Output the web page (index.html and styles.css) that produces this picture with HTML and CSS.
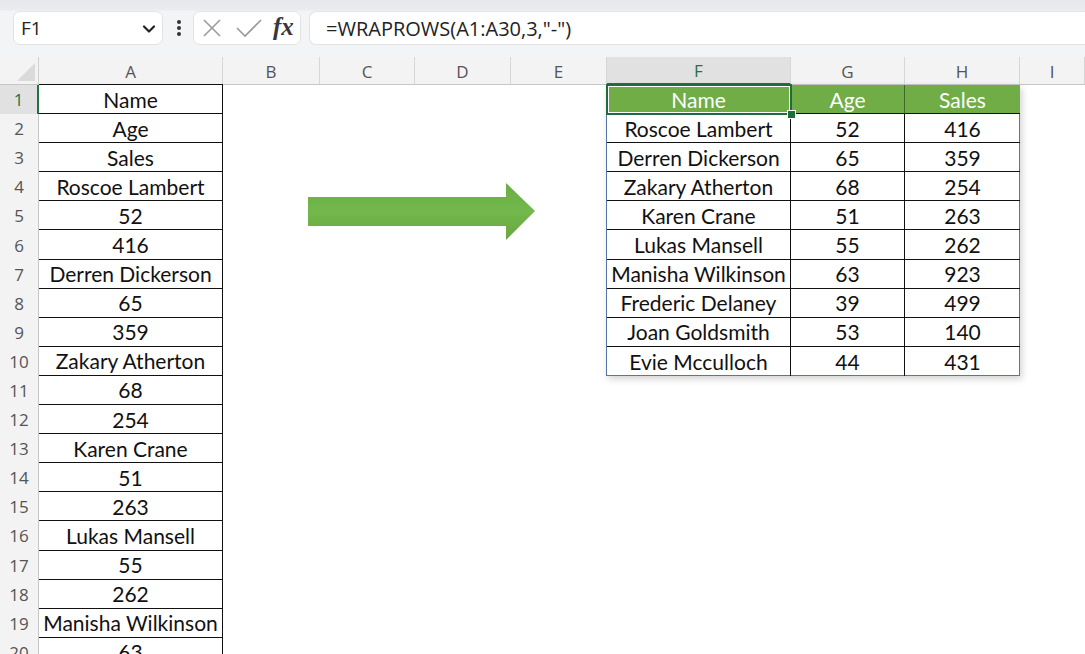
FILE: index.html
```html
<!DOCTYPE html>
<html lang="en">
<head>
  <meta charset="UTF-8" />
  <meta name="viewport" content="width=device-width, initial-scale=1.0"/>
  <title>WRAPROWS</title>
  <link rel="stylesheet" href="styles.css">
</head>
<body>
  <div class="app">
    <div class="toolbar">
      <div class="namebox">
        <span>F1</span>
        <svg class="chevron" width="14" height="10" viewBox="0 0 14 10"><path d="M2 2.5 L7 7.5 L12 2.5" fill="none" stroke="#222" stroke-width="2.2" stroke-linecap="round" stroke-linejoin="round"/></svg>
      </div>
      <svg class="dots" width="6" height="18" viewBox="0 0 6 18"><circle cx="3" cy="3" r="2"/><circle cx="3" cy="9" r="2"/><circle cx="3" cy="15" r="2"/></svg>
      <div class="fxbox">
        <svg width="20" height="20" viewBox="0 0 20 20"><path d="M2 2 L18 18 M18 2 L2 18" stroke="#9a9a9a" stroke-width="1.6" fill="none"/></svg>
        <svg width="26" height="20" viewBox="0 0 26 20"><path d="M1 10 L9 18 L25 2" stroke="#9a9a9a" stroke-width="1.6" fill="none"/></svg>
        <span class="fx">fx</span>
      </div>
      <div class="formula">=WRAPROWS(A1:A30,3,"-")</div>
    </div>

    <div class="sheet" id="sheet"></div>

    <svg class="arrow" width="230" height="60" viewBox="0 0 230 60">
      <defs>
        <linearGradient id="ag" x1="0" y1="0" x2="0" y2="1">
          <stop offset="0" stop-color="#6aad45"/>
          <stop offset="0.5" stop-color="#72b84b"/>
          <stop offset="1" stop-color="#66a842"/>
        </linearGradient>
      </defs>
      <path d="M0 14 L198 14 L198 0 L227 28 L198 57 L198 43 L0 43 Z" fill="url(#ag)"/>
    </svg>
  </div>

  <script>
    const colA = ["Name", "Age", "Sales", "Roscoe Lambert", "52", "416", "Derren Dickerson", "65", "359",
      "Zakary Atherton", "68", "254", "Karen Crane", "51", "263", "Lukas Mansell", "55", "262",
      "Manisha Wilkinson", "63"];
    const people = [
      ["Roscoe Lambert", 52, 416], ["Derren Dickerson", 65, 359], ["Zakary Atherton", 68, 254],
      ["Karen Crane", 51, 263], ["Lukas Mansell", 55, 262], ["Manisha Wilkinson", 63, 923],
      ["Frederic Delaney", 39, 499], ["Joan Goldsmith", 53, 140], ["Evie Mcculloch", 44, 431]
    ];
    const letters = ["A", "B", "C", "D", "E", "F", "G", "H", "I"];

    let html = `<div class="corner"></div>`;
    letters.forEach((l, i) => {
      html += `<div class="colhead${l === "F" ? " active" : ""}" style="grid-column:${i + 2}">${l}</div>`;
    });
    colA.forEach((v, i) => {
      const r = i + 2;
      html += `<div class="rowhead${i === 0 ? " active" : ""}" style="grid-row:${r}">${i + 1}</div>`;
      html += `<div class="cell-a${i === 0 ? " first" : ""}" style="grid-row:${r}">${v}</div>`;
    });

    let t = `<div class="th">Name</div><div class="th">Age</div><div class="th">Sales</div>`;
    people.forEach((p, i) => {
      const last = i === people.length - 1 ? " last" : "";
      t += `<div class="td${last}">${p[0]}</div><div class="td${last}">${p[1]}</div><div class="td end${last}">${p[2]}</div>`;
    });
    html += `<div class="result">${t}<div class="sel"></div><div class="handle"></div></div>`;

    document.getElementById("sheet").innerHTML = html;
  </script>
</body>
</html>
```

FILE: styles.css
```css
body {
  margin: 0;
  background: #fff;
  font-family: Lato, sans-serif;
  overflow: hidden;
}
.app {
  position: relative;
  width: 1085px;
  height: 654px;
  overflow: hidden;
}
.toolbar {
  height: 57px;
  box-sizing: border-box;
  padding: 11px 0 0 13px;
  display: flex;
  align-items: flex-start;
  background: linear-gradient(#e6e8ec 0, #e9ebef 10px, #f3f4f6 11px);
}
.namebox {
  width: 150px;
  height: 34px;
  box-sizing: border-box;
  background: #fff;
  border: 1px solid #e2e3e6;
  border-radius: 7px;
  display: flex;
  align-items: center;
  justify-content: space-between;
  padding: 0 6px 0 7px;
  font-family: "Open Sans", sans-serif;
  font-size: 19px;
  color: #222;
}
.chevron {
  margin-top: 2px;
}
.dots {
  margin: 8px 11px 0 13px;
  fill: #333;
}
.fxbox {
  width: 108px;
  height: 34px;
  box-sizing: border-box;
  background: #fff;
  border: 1px solid #e2e3e6;
  border-radius: 7px;
  display: flex;
  align-items: center;
  gap: 14px;
  padding-left: 8px;
}
.fx {
  font-family: "Liberation Serif", serif;
  font-style: italic;
  font-weight: bold;
  font-size: 25px;
  color: #383838;
  margin-left: -3px;
  margin-top: -2px;
}
.formula {
  flex: 1;
  margin-left: 8px;
  height: 34px;
  box-sizing: border-box;
  background: #fff;
  border: 1px solid #e2e3e6;
  border-right: 0;
  border-radius: 7px 0 0 7px;
  display: flex;
  align-items: center;
  padding-left: 16px;
  font-family: "Open Sans", sans-serif;
  font-size: 20px;
  color: #222;
}
.sheet {
  display: grid;
  grid-template-columns: 39px 184px 97px 95px 96px 96px 184px 114px 115px 1fr;
  grid-template-rows: 28px repeat(20, 29.1px);
  background: #fff;
}
.corner {
  grid-column: 1;
  grid-row: 1;
  background: #f3f3f3;
  border-right: 1px solid #d0d0d0;
  border-bottom: 1px solid #c6c6c6;
  position: relative;
}
.corner::after {
  content: "";
  position: absolute;
  right: 3px;
  bottom: 3px;
  width: 18px;
  height: 18px;
  background: #dadada;
  clip-path: polygon(100% 0, 100% 100%, 0 100%);
}
.colhead {
  grid-row: 1;
  background: #f3f3f3;
  border-right: 1px solid #d6d6d6;
  border-bottom: 1px solid #c6c6c6;
  display: flex;
  align-items: center;
  justify-content: center;
  font-family: "Open Sans", sans-serif;
  font-size: 17px;
  color: #555;
  padding-top: 1px;
  box-sizing: border-box;
}
.colhead.active {
  background: #e1e1e1;
  color: #217346;
  border-bottom: 2px solid #217346;
}
.rowhead {
  grid-column: 1;
  background: #f3f3f3;
  border-right: 1px solid #c6c6c6;
  display: flex;
  align-items: center;
  justify-content: center;
  font-family: "Open Sans", sans-serif;
  font-size: 17px;
  color: #555;
}
.rowhead.active {
  background: #e1e1e1;
  color: #217346;
  border-right: 2px solid #217346;
}
.cell-a {
  grid-column: 2;
  box-sizing: border-box;
  border-right: 1px solid #111;
  border-bottom: 1px solid #111;
  display: flex;
  align-items: center;
  justify-content: center;
  font-size: 21px;
  color: #111;
}
.cell-a.first {
  border-top: 1px solid #111;
  margin-top: -1px;
}
.result {
  grid-column: 7 / 10;
  grid-row: 2 / 12;
  position: relative;
  display: grid;
  grid-template-columns: 184px 114px 115px;
  grid-template-rows: repeat(10, 29.1px);
  border-left: 1px solid #5675a8;
  border-right: 1px solid #5675a8;
  border-bottom: 1px solid #5675a8;
  margin-left: -1px;
  box-shadow: 2px 3px 7px rgba(0, 0, 0, 0.18);
  font-size: 21px;
  color: #111;
}
.th, .td {
  display: flex;
  align-items: center;
  justify-content: center;
  box-sizing: border-box;
}
.th {
  background: #70ad47;
  color: #fff;
  border-right: 1px solid #3f6b28;
  border-bottom: 1px solid #111;
}
.th:nth-child(3) {
  border-right: 0;
}
.td {
  border-right: 1px solid #111;
  border-bottom: 1px solid #111;
}
.td.end {
  border-right: 0;
}
.td.last {
  border-bottom: 0;
}
.sel {
  position: absolute;
  left: -1px;
  top: -1px;
  width: 186px;
  height: 31px;
  box-sizing: border-box;
  border: 2px solid #1e6b3d;
  box-shadow: inset 0 0 0 1px #fff;
}
.handle {
  position: absolute;
  left: 180px;
  top: 25px;
  width: 7px;
  height: 7px;
  background: #1e6b3d;
  border: 1px solid #fff;
}
.arrow {
  position: absolute;
  left: 308px;
  top: 183px;
}
```
